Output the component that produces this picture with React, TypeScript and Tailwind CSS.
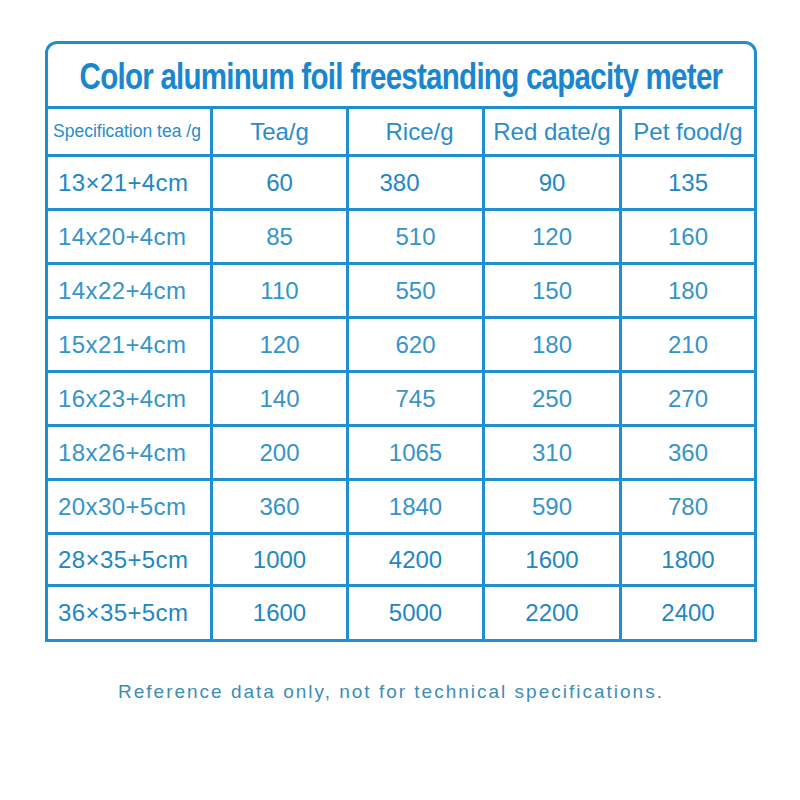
const headers = ["Tea/g", "Rice/g", "Red date/g", "Pet food/g"];

const rows: [string, string, string, string, string][] = [
  ["13×21+4cm", "60", "380", "90", "135"],
  ["14x20+4cm", "85", "510", "120", "160"],
  ["14x22+4cm", "110", "550", "150", "180"],
  ["15x21+4cm", "120", "620", "180", "210"],
  ["16x23+4cm", "140", "745", "250", "270"],
  ["18x26+4cm", "200", "1065", "310", "360"],
  ["20x30+5cm", "360", "1840", "590", "780"],
  ["28×35+5cm", "1000", "4200", "1600", "1800"],
  ["36×35+5cm", "1600", "5000", "2200", "2400"],
];

export default function App() {
  return (
    <div className="w-[800px] h-[800px] bg-white pt-[41px] pl-[45px] font-['Liberation_Sans',Arial,sans-serif]">
      <div className="w-[712px] border-[3px] border-[#1f8fd0] rounded-t-[12px] overflow-hidden">
        {/* title */}
        <div className="h-[65px] flex items-center justify-center border-b-[3px] border-[#1f8fd0] overflow-hidden">
          <h1 className="text-[36px] leading-none font-bold tracking-[-0.9px] text-[#1a86cf] whitespace-nowrap scale-x-[0.82] pt-[3px]">
            Color aluminum foil freestanding capacity meter
          </h1>
        </div>

        <div className="grid grid-cols-[165px_136px_136px_137px_1fr]">
          {/* header row */}
          <div className="h-[48px] flex items-center pl-[5px] border-r-[3px] border-b-[3px] border-[#1f8fd0] text-[17.5px] text-[#2a8ccb] whitespace-nowrap">
            Specification tea /g
          </div>
          {headers.map((h, i) => (
            <div
              key={h}
              className={
                "h-[48px] flex items-center justify-center border-b-[3px] border-[#1f8fd0] text-[24px] text-[#2a8ccb] whitespace-nowrap " +
                (i < 3 ? "border-r-[3px] " : "") +
                (i === 1 ? "pl-[8px]" : "")
              }
            >
              {h}
            </div>
          ))}

          {rows.map((r, ri) => {
            const last = ri === rows.length - 1;
            const bold = r[0].includes("×");
            const h = ri >= 7 ? "h-[52px]" : "h-[54px]";
            return r.map((c, ci) => (
              <div
                key={ri + "-" + ci}
                className={
                  h +
                  " flex items-center border-[#1f8fd0] text-[24px] whitespace-nowrap " +
                  (ci === 0 ? "pl-[10px] tracking-[0.4px] " : "justify-center ") +
                  (ri === 0 && ci === 2 ? "pr-[32px] " : "") +
                  (ci < 4 ? "border-r-[3px] " : "") +
                  (last ? "" : "border-b-[3px] ") +
                  (bold ? "text-[#1e87c4]" : "text-[#3594c9]")
                }
              >
                {c}
              </div>
            ));
          })}
        </div>
      </div>

      <p className="mt-[36px] ml-[73px] text-[19px] tracking-[2px] text-[#3b8db8] whitespace-nowrap">
        Reference data only, not for technical specifications.
      </p>
    </div>
  );
}
